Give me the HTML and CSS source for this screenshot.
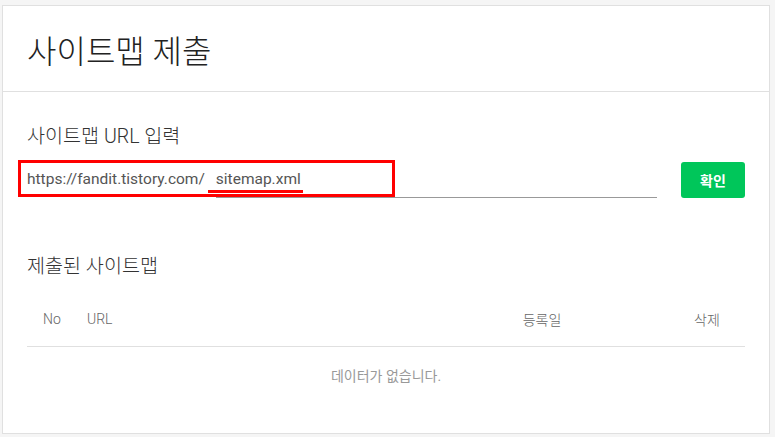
FILE: index.html
```html
<!DOCTYPE html>
<html lang="ko">
<head>
    <meta charset="UTF-8">
    <meta name="viewport" content="width=device-width, initial-scale=1.0">
    <title>사이트맵 제출</title>
    <link rel="stylesheet" href="styles.css">
</head>
<body>
    <div class="card">
        <div class="card-head">
            <h1>사이트맵 제출</h1>
        </div>
        <div class="card-body">
            <h2 class="label">사이트맵 URL 입력</h2>
            <div class="url-row">
                <div class="url-field">
                    <span class="prefix">https://fandit.tistory.com/</span>
                    <span class="url-input"><span class="value">sitemap.xml</span></span>
                    <span class="mark-box"></span>
                </div>
                <button class="btn-ok">확인</button>
            </div>

            <h2 class="label list-title">제출된 사이트맵</h2>
            <table class="list">
                <thead>
                    <tr>
                        <th class="col-no">No</th>
                        <th class="col-url">URL</th>
                        <th class="col-date">등록일</th>
                        <th class="col-del">삭제</th>
                    </tr>
                </thead>
                <tbody>
                    <tr>
                        <td colspan="4" class="empty">데이터가 없습니다.</td>
                    </tr>
                </tbody>
            </table>
        </div>
    </div>
</body>
</html>
```

FILE: styles.css
```css
body {
    margin: 0;
    padding: 5px 0 0 2px;
    background: #f5f5f5;
    font-family: Roboto, "Noto Sans CJK KR", sans-serif;
    color: #333;
}
.card {
    width: 766px;
    background: #fff;
    border: 1px solid #e0e0e0;
}
.card-head {
    height: 85px;
    display: flex;
    align-items: center;
    padding: 0 24px;
    border-bottom: 1px solid #e0e0e0;
}
.card-head h1 {
    margin: 0;
    font-size: 32px;
    font-weight: 300;
    color: #222;
}
.card-body {
    padding: 31px 24px 30px;
}
.label {
    margin: 0;
    font-size: 19.6px;
    line-height: 28px;
    font-weight: 300;
    color: #333;
}
.url-row {
    display: flex;
    align-items: flex-end;
    margin-top: 11px;
    height: 36px;
}
.url-field {
    position: relative;
    display: flex;
    align-items: flex-end;
    width: 630px;
    font-size: 15.5px;
    color: #555;
}
.prefix {
    line-height: 24px;
    padding-bottom: 7px;
}
.url-input {
    flex: 1;
    margin-left: 11px;
    line-height: 24px;
    padding-bottom: 6px;
    border-bottom: 1px solid #999;
}
.value {
    position: relative;
}
/* red underline drawn on the screenshot */
.value::after {
    content: "";
    position: absolute;
    left: -8px;
    right: -2px;
    bottom: -5px;
    height: 3px;
    background: #f00;
}
/* red box drawn on the screenshot */
.mark-box {
    position: absolute;
    left: -9px;
    top: -7px;
    width: 371px;
    height: 31px;
    border: 3px solid #f00;
}
.btn-ok {
    margin-left: auto;
    width: 64px;
    height: 36px;
    border: none;
    border-radius: 3px;
    background: #00c65a;
    color: #fff;
    font-family: "Noto Sans CJK KR", sans-serif;
    font-size: 14px;
    font-weight: bold;
}
.list-title {
    margin-top: 55px;
}
.list {
    width: 100%;
    margin-top: 10px;
    border-collapse: collapse;
    font-size: 14px;
}
.list th {
    height: 55px;
    padding: 0;
    font-weight: 300;
    color: #666;
    border-bottom: 1px solid #e0e0e0;
}
.col-no {
    width: 50px;
    text-align: center;
}
.col-url {
    text-align: left;
    padding-left: 10px !important;
}
.col-date {
    width: 254px;
    text-align: center;
}
.col-del {
    width: 76px;
    text-align: center;
}
.empty {
    height: 56px;
    padding: 0;
    text-align: center;
    font-size: 14px;
    color: #999;
}
```
